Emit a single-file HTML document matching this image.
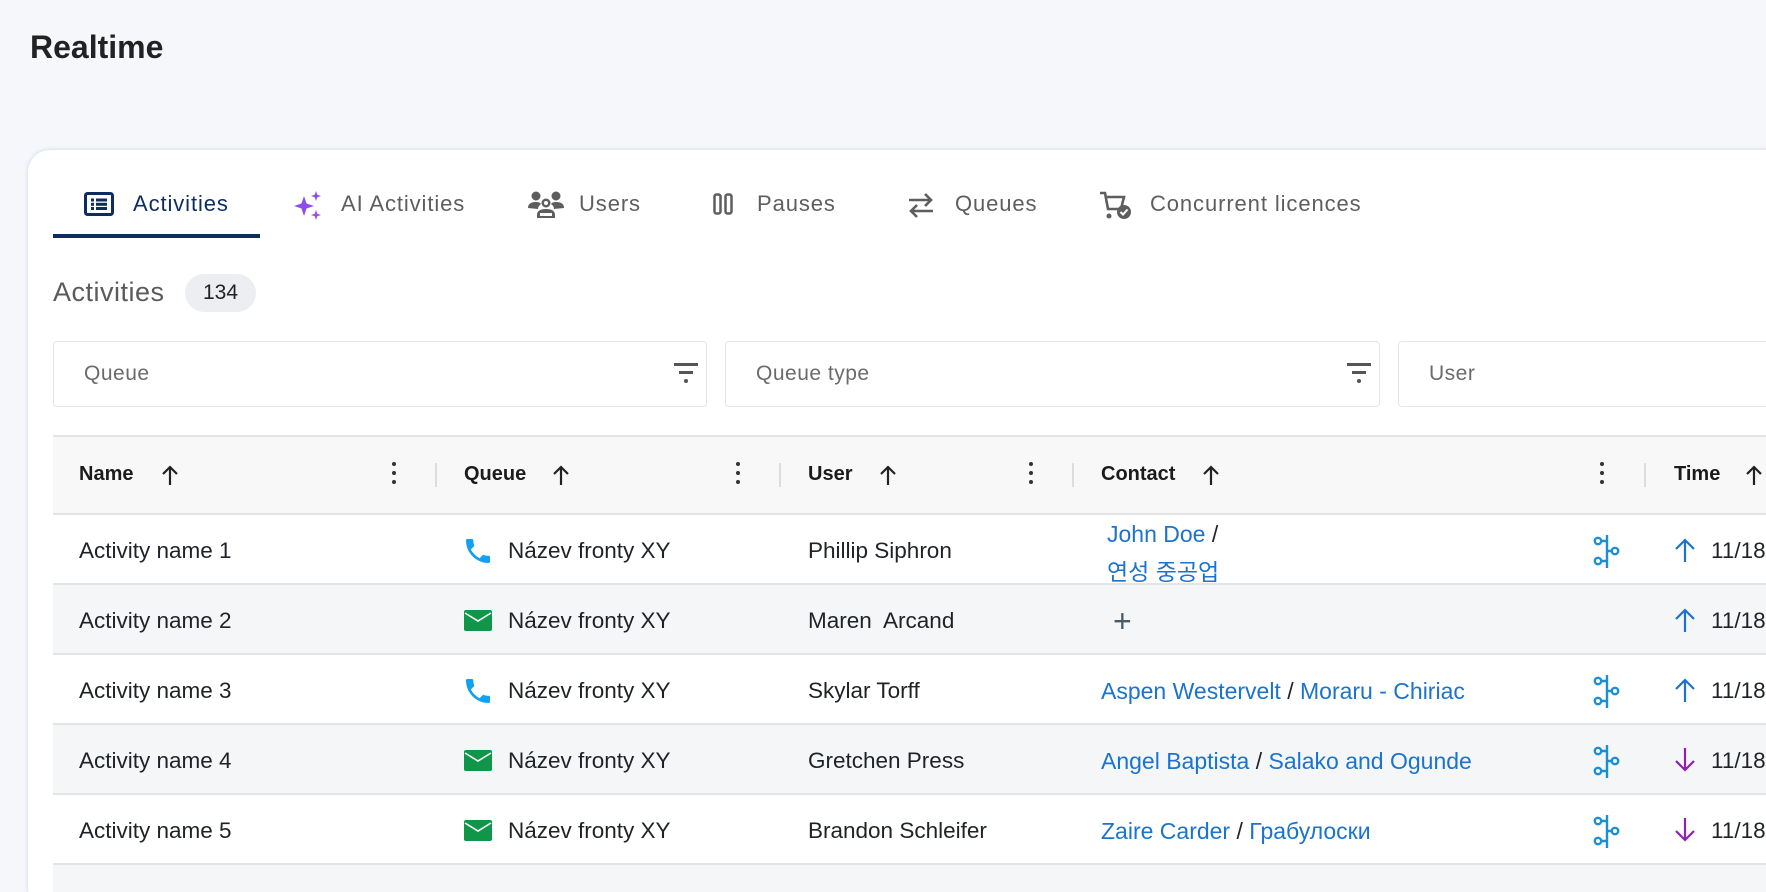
<!DOCTYPE html>
<html><head><meta charset="utf-8"><style>
*{box-sizing:border-box;margin:0;padding:0}
html,body{width:1766px;height:892px;overflow:hidden}
body{background:#f5f7fb;font-family:"Liberation Sans","Noto Sans CJK KR",sans-serif;color:#1f2226;position:relative}
.a{position:absolute;white-space:nowrap}
h1{position:absolute;left:30px;top:29px;font-size:32px;font-weight:bold;color:#222}
.card{position:absolute;left:28px;top:150px;width:1760px;height:760px;background:#fff;border-radius:22px;box-shadow:0 0 4px rgba(120,140,190,.35)}
.tab{position:absolute;top:191px;font-size:22px;color:#5e5e5e;letter-spacing:.9px}
.filter{position:absolute;top:341px;height:66px;border:1.5px solid #e4e6ea;border-radius:4px;background:#fff}
.filter span{position:absolute;left:30px;top:20px;font-size:21px;color:#6b6b6b;letter-spacing:.5px}
.th{position:absolute;top:463px;font-size:20px;font-weight:bold;color:#1b1b1b}
.row{position:absolute;left:53px;width:1713px;border-bottom:2px solid #e3e4e6}
.td{position:absolute;font-size:22.5px;color:#1f2226}
.lnk{color:#1a73d0}
.dots{position:absolute;top:462px;width:4px}
.dots i{display:block;width:4px;height:4px;border-radius:2px;background:#333;margin-bottom:5px}
.div{position:absolute;top:463px;width:2px;height:24px;background:#ddd}
</style></head><body>
<h1>Realtime</h1>
<div class="card"></div>
<svg class="a" style="left:84px;top:192px" width="30" height="24" viewBox="0 0 30 24"><rect x="1.5" y="1.5" width="27" height="21" rx="2" fill="none" stroke="#0d2d5f" stroke-width="3"/><g fill="#0d2d5f"><rect x="7" y="6.5" width="3" height="3"/><rect x="12" y="6.5" width="11" height="3"/><rect x="7" y="10.8" width="3" height="3"/><rect x="12" y="10.8" width="11" height="3"/><rect x="7" y="15" width="3" height="3"/><rect x="12" y="15" width="11" height="3"/></g></svg>
<div class="tab" style="left:133px;color:#0d2d5f">Activities</div>
<div class="a" style="left:53px;top:234px;width:207px;height:4px;background:#0d2d5f"></div>
<svg class="a" style="left:292px;top:190px" width="32" height="30" viewBox="0 0 32 30"><path d="M12 6 L14.5 13.5 L22 16 L14.5 18.5 L12 26 L9.5 18.5 L2 16 L9.5 13.5Z" fill="#8a4cf0"/><path d="M24 1 L25.3 4.7 L29 6 L25.3 7.3 L24 11 L22.7 7.3 L19 6 L22.7 4.7Z" fill="#8a4cf0"/><path d="M24 20 L25.3 23.7 L29 25 L25.3 26.3 L24 30 L22.7 26.3 L19 25 L22.7 23.7Z" fill="#a050e0"/></svg>
<div class="tab" style="left:341px">AI Activities</div>
<svg class="a" style="left:528px;top:190px" width="36" height="28" viewBox="0 0 36 28"><g fill="#5e5e5e"><circle cx="8" cy="6" r="4.5"/><circle cx="28" cy="6" r="4.5"/><path d="M0 18 Q0 12 8 12 Q12 12 13 14 Q10 16 10 19Z"/><path d="M36 18 Q36 12 28 12 Q24 12 23 14 Q26 16 26 19Z"/><circle cx="18" cy="13" r="4.5"/><path d="M9 28 V25 Q9 19 18 19 Q27 19 27 25 V28Z"/></g><circle cx="18" cy="13" r="2" fill="#fff"/><rect x="12" y="23" width="12" height="3" fill="#fff"/></svg>
<div class="tab" style="left:579px">Users</div>
<svg class="a" style="left:713px;top:193px" width="20" height="22" viewBox="0 0 20 22"><rect x="1.5" y="1.5" width="6" height="19" rx="2" fill="none" stroke="#5e5e5e" stroke-width="2.5"/><rect x="12.5" y="1.5" width="6" height="19" rx="2" fill="none" stroke="#5e5e5e" stroke-width="2.5"/></svg>
<div class="tab" style="left:757px">Pauses</div>
<svg class="a" style="left:908px;top:192px" width="26" height="26" viewBox="0 0 26 26" fill="none" stroke="#5e5e5e" stroke-width="2.6"><path d="M1 8 H23 M17 2 L23 8 L17 14"/><path d="M25 19 H3 M9 13 L3 19 L9 25"/></svg>
<div class="tab" style="left:955px">Queues</div>
<svg class="a" style="left:1099px;top:190px" width="34" height="30" viewBox="0 0 34 30"><path d="M1 3 H6 L9 19 H22 L25 7 H8" fill="none" stroke="#5e5e5e" stroke-width="2.6"/><circle cx="10" cy="26" r="2.5" fill="#5e5e5e"/><circle cx="25" cy="22" r="7" fill="#5e5e5e"/><path d="M21.5 22 L24 24.5 L28.5 19.5" fill="none" stroke="#fff" stroke-width="2"/></svg>
<div class="tab" style="left:1150px">Concurrent licences</div>
<div class="a" style="left:53px;top:277px;font-size:27px;color:#5a5a5a;letter-spacing:.5px">Activities</div>
<div class="a" style="left:185px;top:274px;width:71px;height:38px;border-radius:19px;background:#eceef2;font-size:21px;text-align:center;line-height:38px;color:#222">134</div>
<div class="filter" style="left:53px;width:654px"><span>Queue</span></div>
<div class="filter" style="left:725px;width:655px"><span>Queue type</span></div>
<div class="filter" style="left:1398px;width:400px"><span>User</span></div>
<svg class="a" style="left:674px;top:363px" width="24" height="22" viewBox="0 0 24 22"><g fill="#555"><rect x="0" y="0" width="24" height="3"/><rect x="5" y="8" width="14" height="3"/><circle cx="12" cy="18" r="2"/></g></svg>
<svg class="a" style="left:1347px;top:363px" width="24" height="22" viewBox="0 0 24 22"><g fill="#555"><rect x="0" y="0" width="24" height="3"/><rect x="5" y="8" width="14" height="3"/><circle cx="12" cy="18" r="2"/></g></svg>
<div class="a" style="left:53px;top:435px;width:1713px;height:80px;background:#f8f8f8;border-top:2px solid #e3e4e6;border-bottom:2px solid #e3e4e6"></div>
<div class="th" style="left:79px">Name</div>
<div class="th" style="left:464px">Queue</div>
<div class="th" style="left:808px">User</div>
<div class="th" style="left:1101px">Contact</div>
<div class="th" style="left:1674px">Time</div>
<svg class="a" style="left:161px;top:465px" width="18" height="20" viewBox="0 0 18 20" fill="none" stroke="#222" stroke-width="2.2"><path d="M9 20V2 M2 9 L9 2 L16 9"/></svg>
<svg class="a" style="left:552px;top:465px" width="18" height="20" viewBox="0 0 18 20" fill="none" stroke="#222" stroke-width="2.2"><path d="M9 20V2 M2 9 L9 2 L16 9"/></svg>
<svg class="a" style="left:879px;top:465px" width="18" height="20" viewBox="0 0 18 20" fill="none" stroke="#222" stroke-width="2.2"><path d="M9 20V2 M2 9 L9 2 L16 9"/></svg>
<svg class="a" style="left:1202px;top:465px" width="18" height="20" viewBox="0 0 18 20" fill="none" stroke="#222" stroke-width="2.2"><path d="M9 20V2 M2 9 L9 2 L16 9"/></svg>
<svg class="a" style="left:1745px;top:465px" width="18" height="20" viewBox="0 0 18 20" fill="none" stroke="#222" stroke-width="2.2"><path d="M9 20V2 M2 9 L9 2 L16 9"/></svg>
<div class="dots" style="left:392px"><i></i><i></i><i></i></div>
<div class="dots" style="left:736px"><i></i><i></i><i></i></div>
<div class="dots" style="left:1029px"><i></i><i></i><i></i></div>
<div class="dots" style="left:1600px"><i></i><i></i><i></i></div>
<div class="div" style="left:435px"></div><div class="div" style="left:779px"></div><div class="div" style="left:1072px"></div><div class="div" style="left:1644px"></div>
<div class="row" style="top:515px;height:70px;background:#fff"></div>
<div class="row" style="top:585px;height:70px;background:#f5f6f8"></div>
<div class="row" style="top:655px;height:70px;background:#fff"></div>
<div class="row" style="top:725px;height:70px;background:#f5f6f8"></div>
<div class="row" style="top:795px;height:70px;background:#fff"></div>
<div class="row" style="top:865px;height:27px;background:#f5f6f8;border:none"></div>

<div class="td" style="left:79px;top:538px">Activity name 1</div>
<div class="td" style="left:79px;top:608px">Activity name 2</div>
<div class="td" style="left:79px;top:678px">Activity name 3</div>
<div class="td" style="left:79px;top:748px">Activity name 4</div>
<div class="td" style="left:79px;top:818px">Activity name 5</div>

<svg class="a" style="left:462px;top:535px" width="32" height="32" viewBox="0 0 24 24"><path fill="#12a0f0" d="M6.6 10.8c1.4 2.8 3.8 5.1 6.6 6.6l2.2-2.2c.3-.3.7-.4 1-.2 1.1.4 2.3.6 3.6.6.6 0 1 .4 1 1V20c0 .6-.4 1-1 1C10.6 21 3 13.4 3 4c0-.6.4-1 1-1h3.5c.6 0 1 .4 1 1 0 1.3.2 2.5.6 3.6.1.3 0 .7-.2 1z"/></svg>
<svg class="a" style="left:462px;top:675px" width="32" height="32" viewBox="0 0 24 24"><path fill="#12a0f0" d="M6.6 10.8c1.4 2.8 3.8 5.1 6.6 6.6l2.2-2.2c.3-.3.7-.4 1-.2 1.1.4 2.3.6 3.6.6.6 0 1 .4 1 1V20c0 .6-.4 1-1 1C10.6 21 3 13.4 3 4c0-.6.4-1 1-1h3.5c.6 0 1 .4 1 1 0 1.3.2 2.5.6 3.6.1.3 0 .7-.2 1z"/></svg>
<svg class="a" style="left:464px;top:610px" width="28" height="21" viewBox="0 0 28 21"><rect width="28" height="21" rx="2" fill="#0f9648"/><path d="M1 3 L14 11 L27 3" fill="none" stroke="#fff" stroke-width="1.6"/></svg>
<svg class="a" style="left:464px;top:750px" width="28" height="21" viewBox="0 0 28 21"><rect width="28" height="21" rx="2" fill="#0f9648"/><path d="M1 3 L14 11 L27 3" fill="none" stroke="#fff" stroke-width="1.6"/></svg>
<svg class="a" style="left:464px;top:820px" width="28" height="21" viewBox="0 0 28 21"><rect width="28" height="21" rx="2" fill="#0f9648"/><path d="M1 3 L14 11 L27 3" fill="none" stroke="#fff" stroke-width="1.6"/></svg>
<div class="td" style="left:508px;top:538px">Název fronty XY</div>
<div class="td" style="left:508px;top:608px">Název fronty XY</div>
<div class="td" style="left:508px;top:678px">Název fronty XY</div>
<div class="td" style="left:508px;top:748px">Název fronty XY</div>
<div class="td" style="left:508px;top:818px">Název fronty XY</div>

<div class="td" style="left:808px;top:538px">Phillip Siphron</div>
<div class="td" style="left:808px;top:608px">Maren&nbsp; Arcand</div>
<div class="td" style="left:808px;top:678px">Skylar Torff</div>
<div class="td" style="left:808px;top:748px">Gretchen Press</div>
<div class="td" style="left:808px;top:818px">Brandon Schleifer</div>

<div class="td" style="left:1107px;top:521px;font-size:23px"><span class="lnk">John Doe</span> /</div>
<div class="td lnk" style="left:1107px;top:553px;font-size:23px">연성 중공업</div>
<div class="td" style="left:1113px;top:603px;font-size:32px;color:#4a5a66">+</div>
<div class="td" style="left:1101px;top:678px;font-size:23px"><span class="lnk">Aspen Westervelt</span> / <span class="lnk">Moraru - Chiriac</span></div>
<div class="td" style="left:1101px;top:748px;font-size:23px"><span class="lnk">Angel Baptista</span> / <span class="lnk">Salako and Ogunde</span></div>
<div class="td" style="left:1101px;top:818px;font-size:23px"><span class="lnk">Zaire Carder</span> / <span class="lnk">Грабулоски</span></div>

<svg class="a" style="left:1590px;top:533px" width="32" height="36" viewBox="0 0 32 36" fill="none" stroke="#1a8fd6" stroke-width="2.4"><path d="M17 2 V35"/><circle cx="8" cy="8" r="3.2"/><circle cx="8" cy="28" r="3.2"/><circle cx="25" cy="18" r="3.2"/><path d="M11 8 H17 M11 28 H17 M17 18 H22"/></svg>
<svg class="a" style="left:1590px;top:673px" width="32" height="36" viewBox="0 0 32 36" fill="none" stroke="#1a8fd6" stroke-width="2.4"><path d="M17 2 V35"/><circle cx="8" cy="8" r="3.2"/><circle cx="8" cy="28" r="3.2"/><circle cx="25" cy="18" r="3.2"/><path d="M11 8 H17 M11 28 H17 M17 18 H22"/></svg>
<svg class="a" style="left:1590px;top:743px" width="32" height="36" viewBox="0 0 32 36" fill="none" stroke="#1a8fd6" stroke-width="2.4"><path d="M17 2 V35"/><circle cx="8" cy="8" r="3.2"/><circle cx="8" cy="28" r="3.2"/><circle cx="25" cy="18" r="3.2"/><path d="M11 8 H17 M11 28 H17 M17 18 H22"/></svg>
<svg class="a" style="left:1590px;top:813px" width="32" height="36" viewBox="0 0 32 36" fill="none" stroke="#1a8fd6" stroke-width="2.4"><path d="M17 2 V35"/><circle cx="8" cy="8" r="3.2"/><circle cx="8" cy="28" r="3.2"/><circle cx="25" cy="18" r="3.2"/><path d="M11 8 H17 M11 28 H17 M17 18 H22"/></svg>

<svg class="a" style="left:1674px;top:538px" width="22" height="24" viewBox="0 0 22 24" fill="none" stroke="#1a73d0" stroke-width="2.2"><path d="M11 24V2 M2 11 L11 2 L20 11"/></svg>
<svg class="a" style="left:1674px;top:608px" width="22" height="24" viewBox="0 0 22 24" fill="none" stroke="#1a73d0" stroke-width="2.2"><path d="M11 24V2 M2 11 L11 2 L20 11"/></svg>
<svg class="a" style="left:1674px;top:678px" width="22" height="24" viewBox="0 0 22 24" fill="none" stroke="#1a73d0" stroke-width="2.2"><path d="M11 24V2 M2 11 L11 2 L20 11"/></svg>
<svg class="a" style="left:1674px;top:748px" width="22" height="24" viewBox="0 0 22 24" fill="none" stroke="#9020b0" stroke-width="2.2"><path d="M11 0V22 M2 13 L11 22 L20 13"/></svg>
<svg class="a" style="left:1674px;top:818px" width="22" height="24" viewBox="0 0 22 24" fill="none" stroke="#9020b0" stroke-width="2.2"><path d="M11 0V22 M2 13 L11 22 L20 13"/></svg>
<div class="td" style="left:1711px;top:538px">11/18</div>
<div class="td" style="left:1711px;top:608px">11/18</div>
<div class="td" style="left:1711px;top:678px">11/18</div>
<div class="td" style="left:1711px;top:748px">11/18</div>
<div class="td" style="left:1711px;top:818px">11/18</div>
</body></html>
